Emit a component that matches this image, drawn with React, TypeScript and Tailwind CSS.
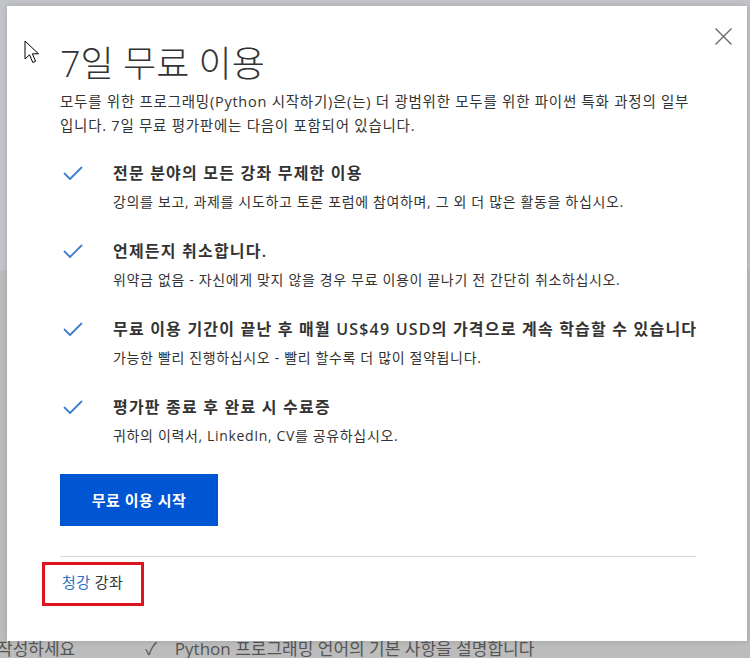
import React from "react";

const font = { fontFamily: '"Open Sans","Noto Sans CJK KR",sans-serif' };

function Check() {
  return (
    <svg width="20" height="15" viewBox="0 0 20 15" fill="none">
      <path d="M1.5 7.5 L7 13 L18.5 1.5" stroke="#3f7fcf" strokeWidth="1.8" strokeLinecap="round" strokeLinejoin="round" />
    </svg>
  );
}

const items = [
  {
    t: "전문 분야의 모든 강좌 무제한 이용",
    d: "강의를 보고, 과제를 시도하고 토론 포럼에 참여하며, 그 외 더 많은 활동을 하십시오.",
  },
  {
    t: "언제든지 취소합니다.",
    d: "위약금 없음 - 자신에게 맞지 않을 경우 무료 이용이 끝나기 전 간단히 취소하십시오.",
  },
  {
    t: "무료 이용 기간이 끝난 후 매월 US$49 USD의 가격으로 계속 학습할 수 있습니다",
    d: "가능한 빨리 진행하십시오 - 빨리 할수록 더 많이 절약됩니다.",
  },
  {
    t: "평가판 종료 후 완료 시 수료증",
    d: "귀하의 이력서, LinkedIn, CV를 공유하십시오.",
  },
];

export default function App() {
  return (
    <div className="relative w-[750px] h-[658px] overflow-hidden bg-[#bcbcbc]" style={font}>
      {/* background page fragments */}
      <div className="absolute left-0 top-0 w-full h-[270px] bg-[#c3c4c9]" />
      <div className="absolute left-0 top-[639px] w-full h-[19px] flex items-center text-[17px] leading-[22px] text-[#555] whitespace-nowrap">
        <span className="ml-[-3px]">작성하세요</span>
        <span className="ml-[70px] text-[#555]">✓</span>
        <span className="ml-[18px]">Python 프로그래밍 언어의 기본 사항을 설명합니다</span>
      </div>

      {/* modal */}
      <div className="absolute left-[7px] top-[6px] w-[740px] h-[635px] bg-white shadow-[0_0_6px_rgba(0,0,0,0.15)]">
        <button className="absolute left-[708px] top-[22px] w-[17px] h-[17px]" aria-label="close">
          <svg width="17" height="17" viewBox="0 0 17 17">
            <path d="M0.5 0.5 L16.5 16.5 M16.5 0.5 L0.5 16.5" stroke="#6b6b6b" strokeWidth="1.4" />
          </svg>
        </button>

        <div className="pl-[53px] pr-[51px] pt-[36px] flex flex-col">
          <h1 className="text-[36px] leading-[44px] font-light text-[#333]">7일 무료 이용</h1>
          <p className="mt-[4px] text-[14.5px] leading-[24px] tracking-[0.75px] text-[#333] whitespace-nowrap">
            모두를 위한 프로그래밍(Python 시작하기)은(는) 더 광범위한 모두를 위한 파이썬 특화 과정의 일부
            <br />
            입니다. 7일 무료 평가판에는 다음이 포함되어 있습니다.
          </p>

          <ul className="mt-[23px] flex flex-col gap-[25px]">
            {items.map((it) => (
              <li key={it.t} className="flex">
                <div className="w-[53px] shrink-0 pl-[3px] pt-[5px]">
                  <Check />
                </div>
                <div className="flex flex-col gap-[5px] whitespace-nowrap">
                  <div className="text-[16px] leading-[24px] font-semibold tracking-[1.2px] text-[#333]">{it.t}</div>
                  <div className="text-[14px] leading-[24px] tracking-[0.65px] text-[#333]">{it.d}</div>
                </div>
              </li>
            ))}
          </ul>

          <button className="mt-[26px] w-[158px] h-[52px] bg-[#0056d2] text-white text-[15px] font-bold tracking-[0.5px] flex items-center justify-center">
            무료 이용 시작
          </button>

          <div className="mt-[30px] h-px bg-[#d6d6d6]" />

          <div className="mt-[5px] ml-[-18px] w-[102px] h-[44px] border-[3px] border-[#e0141e] pl-[17px] pt-[7px] text-[15px] leading-[20px] tracking-[0.4px] whitespace-nowrap">
            <span className="text-[#2a6fc9]">청강</span>
            <span className="text-[#333]"> 강좌</span>
          </div>
        </div>
      </div>

      {/* mouse cursor */}
      <svg className="absolute left-[24px] top-[40px]" width="16" height="25" viewBox="0 0 16 25">
        <path d="M1 1 L1 19 L5.5 14.8 L8.8 22.5 L11.6 21.3 L8.4 13.8 L14.5 13.8 Z" fill="white" stroke="black" strokeWidth="1" strokeLinejoin="round" />
      </svg>
    </div>
  );
}
